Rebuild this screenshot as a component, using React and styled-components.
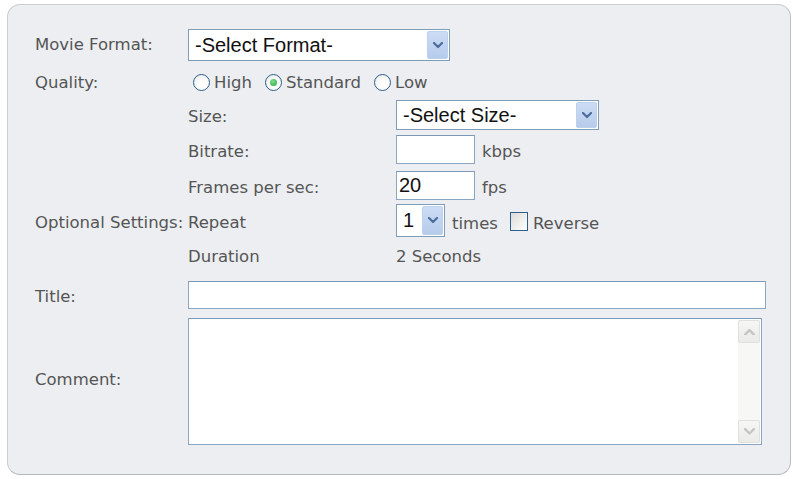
import React from 'react';
import styled, { createGlobalStyle } from 'styled-components';

const GlobalStyle = createGlobalStyle`
  body {
    margin: 0;
    background: #ffffff;
  }
`;

const Panel = styled.form`
  box-sizing: border-box;
  width: 784px;
  height: 471px;
  margin: 4px 0 0 7px;
  padding: 22px 24px 0 27px;
  background: #eceef1;
  border: 1px solid #cbcdd0;
  border-right-color: #bbbdc0;
  border-bottom-color: #b6b8bb;
  border-radius: 13px;
  font-family: "DejaVu Sans", Verdana, sans-serif;
  font-size: 16.5px;
  color: #555555;
  display: grid;
  grid-template-columns: 153px 208px 1fr;
  grid-template-rows: 36px 37px 32px 35px 36px 35px 36px 42px 129px;
`;

/* shift moves the text off the row centre, positive is down */
const FieldLabel = styled.div`
  grid-column: ${({ $col }) => $col || 'auto'};
  align-self: center;
  white-space: nowrap;
  line-height: 1;
  position: relative;
  top: ${({ $shift }) => ($shift === undefined ? 2 : $shift)}px;
`;

const Field = styled.div`
  grid-column: ${({ $span }) => ($span ? 'span 2' : 'auto')};
  display: flex;
  align-items: ${({ $align }) => $align || 'center'};
  min-width: 0;
`;

const SelectBox = styled.div`
  box-sizing: border-box;
  width: ${({ $width }) => $width}px;
  height: ${({ $height }) => $height || 31}px;
  display: flex;
  align-items: center;
  background: #ffffff;
  border: 1px solid #7f9db9;
  padding: 1px;
  font-family: "Liberation Sans", Arial, sans-serif;
  font-size: 20px;
  color: #111;
`;

const SelectText = styled.span`
  flex: 1;
  padding-left: 5px;
  white-space: nowrap;
  overflow: hidden;
`;

const ArrowButton = styled.span`
  box-sizing: border-box;
  width: 21px;
  height: 100%;
  display: flex;
  align-items: center;
  justify-content: center;
  background: linear-gradient(#cddcf5, #b6cbeb);
  border: 1px solid #bdd0ec;
  border-radius: 2px;
`;

const Chevron = ({ up, color = '#4d6c9e', size = 10 }) => (
  <svg width={size} height={size * 0.7} viewBox="0 0 10 7">
    <polyline
      points={up ? '1,6 5,2 9,6' : '1,1 5,5 9,1'}
      fill="none"
      stroke={color}
      strokeWidth="2.2"
      strokeLinecap="round"
      strokeLinejoin="round"
    />
  </svg>
);

const Select = ({ width, height, value }) => (
  <SelectBox $width={width} $height={height}>
    <SelectText>{value}</SelectText>
    <ArrowButton>
      <Chevron />
    </ArrowButton>
  </SelectBox>
);

const TextBox = styled.div`
  box-sizing: border-box;
  width: ${({ $width }) => ($width ? `${$width}px` : '100%')};
  height: ${({ $height }) => $height}px;
  background: #ffffff;
  border: 1px solid #8aa6c2;
  border-top-color: #7b98b6;
  padding: 0 2px;
  display: flex;
  align-items: center;
  font-family: "Liberation Sans", Arial, sans-serif;
  font-size: 20px;
  color: #111;
`;

const Unit = styled.span`
  padding-top: ${({ $drop }) => ($drop === undefined ? 4 : $drop)}px;
  margin-left: ${({ $gap }) => $gap || 0}px;
`;

const RadioGroup = styled.div`
  display: flex;
  align-items: center;
  gap: 13px;
  padding-left: 5px;
  padding-top: 2px;
`;

const RadioOption = styled.span`
  display: flex;
  align-items: center;
  gap: 4px;
`;

const RadioCircle = styled.span`
  box-sizing: border-box;
  width: 17px;
  height: 17px;
  border-radius: 50%;
  border: 1px solid #2d5f8e;
  background: radial-gradient(circle at 60% 65%, #ffffff 30%, #e3e6e3 100%);
  display: flex;
  align-items: center;
  justify-content: center;

  &::after {
    content: '';
    width: 7px;
    height: 7px;
    border-radius: 50%;
    background: ${({ $checked }) =>
      $checked ? 'radial-gradient(circle at 40% 35%, #7fe08f, #23a73c)' : 'transparent'};
  }
`;

const Radio = ({ checked, children }) => (
  <RadioOption>
    <RadioCircle $checked={checked} />
    {children}
  </RadioOption>
);

const CheckBox = styled.span`
  box-sizing: border-box;
  width: 18px;
  height: 19px;
  border: 1px solid #2d5f8e;
  background: linear-gradient(135deg, #dcdcd7, #ffffff);
  margin-left: 12px;
  margin-top: 2px;
`;

const CommentBox = styled.div`
  box-sizing: border-box;
  width: 574px;
  height: 127px;
  background: #ffffff;
  border: 1px solid #8aa6c2;
  border-top-color: #7b98b6;
  padding: 1px;
  display: flex;
  justify-content: flex-end;
`;

const ScrollBar = styled.div`
  width: 22px;
  display: flex;
  flex-direction: column;
  justify-content: space-between;
  background: #f7f7f5;
`;

const ScrollButton = styled.span`
  box-sizing: border-box;
  height: 23px;
  display: flex;
  align-items: center;
  justify-content: center;
  background: linear-gradient(#f6f6f4, #ebebe8);
  border: 1px solid #e0e0dc;
  border-radius: 2px;
`;

export default function App() {
  return (
    <>
      <GlobalStyle />
      <Panel>
        <FieldLabel $shift={0}>Movie Format:</FieldLabel>
        <Field $span>
          <Select width={262} height={32} value="-Select Format-" />
        </Field>

        <FieldLabel>Quality:</FieldLabel>
        <Field $span>
          <RadioGroup>
            <Radio>High</Radio>
            <Radio checked>Standard</Radio>
            <Radio>Low</Radio>
          </RadioGroup>
        </Field>

        <FieldLabel $col={2} $shift={1}>Size:</FieldLabel>
        <Field $align="flex-start">
          <Select width={203} height={30} value="-Select Size-" />
        </Field>

        <FieldLabel $col={2} $shift={3}>Bitrate:</FieldLabel>
        <Field>
          <TextBox $width={79} $height={29} />
          <Unit $gap={7}>kbps</Unit>
        </Field>

        <FieldLabel $col={2} $shift={3}>Frames per sec:</FieldLabel>
        <Field>
          <TextBox $width={79} $height={29}>20</TextBox>
          <Unit $gap={7}>fps</Unit>
        </Field>

        <FieldLabel $shift={3}>Optional Settings:</FieldLabel>
        <FieldLabel $shift={3}>Repeat</FieldLabel>
        <Field>
          <Select width={49} height={33} value="1" />
          <Unit $gap={7} $drop={6}>times</Unit>
          <CheckBox />
          <Unit $gap={5} $drop={6}>Reverse</Unit>
        </Field>

        <FieldLabel $col={2} $shift={1}>Duration</FieldLabel>
        <Field>
          <Unit $drop={0}>2 Seconds</Unit>
        </Field>

        <FieldLabel>Title:</FieldLabel>
        <Field $span>
          <TextBox $height={28} />
        </Field>

        <FieldLabel $shift={0}>Comment:</FieldLabel>
        <Field $span $align="flex-end">
          <CommentBox>
            <ScrollBar>
              <ScrollButton>
                <Chevron up color="#c4c6c2" size={11} />
              </ScrollButton>
              <ScrollButton>
                <Chevron color="#c4c6c2" size={11} />
              </ScrollButton>
            </ScrollBar>
          </CommentBox>
        </Field>
      </Panel>
    </>
  );
}
